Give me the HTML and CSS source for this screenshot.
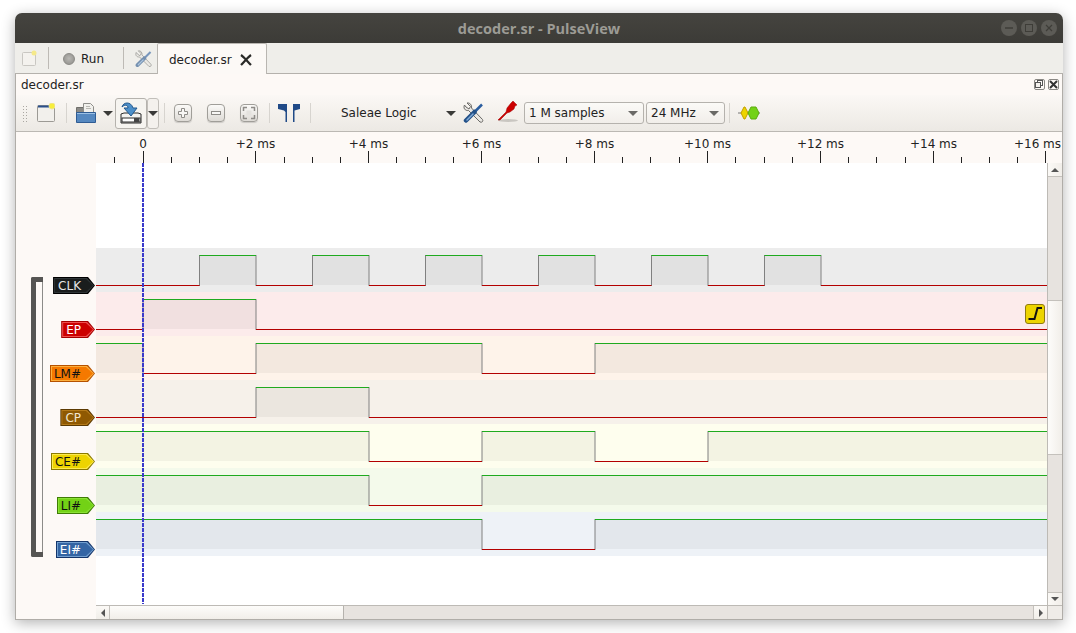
FILE: index.html
```html
<!DOCTYPE html>
<html>
  <head>
    <title>decoder.sr - PulseView</title>
    <link rel="stylesheet" href="styles.css">
  </head>
  <body>
    <div class="window">
      <header class="titlebar">
        <span class="title">decoder.sr - PulseView</span>
        <div class="win-buttons">
          <span class="win-btn"><svg width="16" height="16"><path d="M4 8h8" stroke="#3e3d38" stroke-width="1.5"/></svg></span>
          <span class="win-btn"><svg width="16" height="16"><rect x="4.5" y="4.5" width="7" height="7" fill="none" stroke="#3e3d38"/></svg></span>
          <span class="win-btn"><svg width="16" height="16"><path d="M5 5l6 6M11 5l-6 6" stroke="#3e3d38" stroke-width="1.2"/></svg></span>
        </div>
      </header>

      <nav class="tabbar">
        <svg class="tab-new" width="16" height="17" viewBox="0 0 16 17">
          <rect x="1.5" y="2.5" width="13" height="13" rx="1" fill="#f4f2ee" stroke="#c9c7c2"/>
          <circle cx="13" cy="3" r="2.5" fill="#f5e98a"/>
        </svg>
        <span class="tab-sep"></span>
        <span class="run-led"></span>
        <span class="run-text">Run</span>
        <span class="tab-sep tab-sep-2"></span>
        <svg class="tab-tool" width="18" height="18" viewBox="0 0 22 22">
          <path d="M4 1L7.5 4.5 6 7 3 5 1.5 3C0 6 2 9 5.5 8.5L17 20c2 1 3.5-1 2.5-2.5L8.5 6C9 3 7 .5 4 1z" fill="#e9e7e3" stroke="#6a6966"/>
          <path d="M19 2.5L12 9.5" stroke="#2a5d9f" stroke-width="2.5"/>
          <path d="M11.5 10L3 18.5" stroke="#235189" stroke-width="4.5" stroke-linecap="round"/>
          <path d="M10 12L4 18" stroke="#7fa9d6" stroke-width="1.5" stroke-linecap="round"/>
        </svg>
        <div class="tab-active">
          <span>decoder.sr</span>
          <svg width="12" height="12" viewBox="0 0 12 12"><path d="M1 1c3 2 7 7 10 10M11 1C8 3 4 8 1 11" fill="none" stroke="#2a2a28" stroke-width="2.2"/></svg>
        </div>
      </nav>

      <div class="pane">
        <div class="dock-title">
          <span>decoder.sr</span>
          <div class="dock-buttons">
            <span class="dock-btn"><svg width="11" height="11"><rect x="3.5" y="1.5" width="5" height="5" fill="none" stroke="#555"/><rect x="1.5" y="3.5" width="5" height="5" fill="#f4f1ed" stroke="#555"/></svg></span>
            <span class="dock-btn"><svg width="11" height="11"><path d="M2 2l7 7M9 2l-7 7" stroke="#333" stroke-width="2"/></svg></span>
          </div>
        </div>

        <div class="toolbar">
          <span class="grip"></span>

          <svg class="tb-new" width="18" height="19" viewBox="0 0 18 19">
            <rect x=".5" y="2.5" width="17" height="16" rx="1" fill="#f2f0ec" stroke="#9c9a95"/>
            <path d="M1 3.5h15" stroke="#2a4f8a" stroke-width="2"/>
            <circle cx="15" cy="3" r="3" fill="#f7ee3c" stroke="#efe58c"/>
          </svg>

          <span class="sep sep-new"></span>

          <svg class="tb-open" width="20" height="20" viewBox="0 0 20 20">
            <path d="M.5 4.5h7v6h-7z" fill="#8b8a86" stroke="#6f6e6a"/>
            <path d="M7.5 .5h7l3 3v8h-10z" fill="#f1f0ec" stroke="#8f8e8a"/>
            <path d="M10 3.5h4M10 5.5h5" stroke="#b9b8b3"/>
            <path d="M.5 9.5h19v10h-19z" fill="#5588c0" stroke="#2f5c94"/>
            <path d="M1 10.5h18" stroke="#9cc0e4"/>
          </svg>
          <span class="arrow-down tb-open-arrow"></span>

          <div class="save-btn">
            <svg width="24" height="24" viewBox="0 0 24 24">
              <path d="M2 15v-2l3-1h14l3 1v9H2z" fill="#f3f2ef" stroke="#2b2b2b"/>
              <rect x="3" y="17" width="18" height="4" fill="#fff" stroke="#2b2b2b"/>
              <rect x="15" y="17" width="5" height="4" fill="#444"/>
              <path d="M3 6c1-5 9-6 11 1h4l-6 8-7-8h4C9 4 6 3 3 6z" fill="#4c8fc9" stroke="#235a8f"/>
            </svg>
          </div>
          <div class="save-drop"><span class="arrow-down"></span></div>

          <span class="sep sep-save"></span>

          <span class="zoom-btn zoom-in">
            <svg width="12" height="12" viewBox="0 0 12 12"><path d="M4.5 1.5h3v3h3v3h-3v3h-3v-3h-3v-3h3z" fill="#f8f7f5" stroke="#8e8c88"/></svg>
          </span>
          <span class="zoom-btn zoom-gap">
            <svg width="12" height="12" viewBox="0 0 12 12"><rect x="1.5" y="4.5" width="9" height="3" fill="#f8f7f5" stroke="#8e8c88"/></svg>
          </span>
          <span class="zoom-btn zoom-gap">
            <svg width="14" height="14" viewBox="0 0 14 14"><path d="M1.5 5V1.5H5M9 1.5h3.5V5M12.5 9v3.5H9M5 12.5H1.5V9" fill="none" stroke="#8e8c88" stroke-width="1.5"/><rect x="4.5" y="4.5" width="5" height="5" fill="#e4e2de"/></svg>
          </span>

          <span class="sep sep-zoom"></span>

          <svg class="tb-flags" width="22" height="18" viewBox="0 0 22 18">
            <path d="M0 0h9v18H7.5V8L6 6.5 0 5z" fill="#204a87"/>
            <path d="M15 0h7v5l-5.5 1.5V18H15z" fill="#204a87"/>
          </svg>

          <span class="sep sep-flags"></span>

          <div class="device">
            <span>Saleae Logic</span>
            <span class="arrow-down"></span>
          </div>

          <svg class="tb-tool" width="22" height="22" viewBox="0 0 22 22">
            <path d="M4 1L7.5 4.5 6 7 3 5 1.5 3C0 6 2 9 5.5 8.5L17 20c2 1 3.5-1 2.5-2.5L8.5 6C9 3 7 .5 4 1z" fill="#e9e7e3" stroke="#6a6966"/>
            <path d="M19 2.5L12 9.5" stroke="#2a5d9f" stroke-width="2.5"/>
            <path d="M11.5 10L3 18.5" stroke="#235189" stroke-width="4.5" stroke-linecap="round"/>
            <path d="M10 12L4 18" stroke="#7fa9d6" stroke-width="1.5" stroke-linecap="round"/>
          </svg>

          <svg class="tb-probe" width="21" height="22" viewBox="0 0 21 22">
            <ellipse cx="11" cy="19.5" rx="10" ry="1.5" fill="#c9c6c1"/>
            <path d="M1 19L9 11 10 7 14 2l2-2 4 4-2 1-1 3-4 3-3 1-7 7z" fill="#cc0000" stroke="#a00000" stroke-width=".5"/>
          </svg>

          <div class="combo combo-samples"><span>1 M samples</span><span class="arrow-down arrow-grey"></span></div>
          <div class="combo combo-rate"><span>24 MHz</span><span class="arrow-down arrow-grey"></span></div>

          <span class="sep sep-combo"></span>

          <svg class="tb-decoder" width="22" height="14" viewBox="0 0 22 14">
            <path d="M0 7h22" stroke="#777"/>
            <path d="M6 1h1l3 6-3 6H6L3 7z" fill="#edd400" stroke="#c4a000"/>
            <path d="M13 1h5l3 6-3 6h-5l-3-6z" fill="#73d216" stroke="#5cab0e"/>
          </svg>
        </div>

        <div class="ruler">
          <svg width="1046" height="31" viewBox="0 0 1046 31">
            <path class="tick" d="M127.5 19V31M239.5 19V31M352.5 19V31M465.5 19V31M578.5 19V31M691.5 19V31M804.5 19V31M917.5 19V31M1029.5 19V31"/>
            <path class="tick" d="M98.5 25V31M155.5 25V31M183.5 25V31M211.5 25V31M268.5 25V31M296.5 25V31M324.5 25V31M380.5 25V31M409.5 25V31M437.5 25V31M493.5 25V31M522.5 25V31M550.5 25V31M606.5 25V31M634.5 25V31M663.5 25V31M719.5 25V31M748.5 25V31M776.5 25V31M832.5 25V31M860.5 25V31M889.5 25V31M945.5 25V31M973.5 25V31M1001.5 25V31"/>
            <text x="127" y="16">0</text>
            <text x="239.5" y="16">+2 ms</text>
            <text x="352.5" y="16">+4 ms</text>
            <text x="465.5" y="16">+6 ms</text>
            <text x="578.5" y="16">+8 ms</text>
            <text x="691.5" y="16">+10 ms</text>
            <text x="804.5" y="16">+12 ms</text>
            <text x="917.5" y="16">+14 ms</text>
            <text x="1021.5" y="16">+16 ms</text>
          </svg>
        </div>

        <div class="view">
          <div class="labels">
            <div class="bracket"></div>
            <div class="tags">
              <div class="tag tag-clk"><span>CLK</span></div>
              <div class="tag tag-ep"><span>EP</span></div>
              <div class="tag tag-lm"><span>LM#</span></div>
              <div class="tag tag-cp"><span>CP</span></div>
              <div class="tag tag-ce"><span>CE#</span></div>
              <div class="tag tag-li"><span>LI#</span></div>
              <div class="tag tag-ei"><span>EI#</span></div>
            </div>
          </div>

          <div class="traces">
            <div class="row row-clk">
              <svg class="wave" width="951" height="44">
                <path class="fill" d="M103.5 7H160V37H103.5ZM216.5 7H273V37H216.5ZM329.5 7H386V37H329.5ZM442.5 7H499V37H442.5ZM555.5 7H612V37H555.5ZM668.5 7H725V37H668.5Z"/>
                <path class="edge" d="M103.5 7V38M160 7V38M216.5 7V38M273 7V38M329.5 7V38M386 7V38M442.5 7V38M499 7V38M555.5 7V38M612 7V38M668.5 7V38M725 7V38"/>
                <path class="hi" d="M103.5 7.5H160M216.5 7.5H273M329.5 7.5H386M442.5 7.5H499M555.5 7.5H612M668.5 7.5H725"/>
                <path class="lo" d="M0 37.5H103.5M160 37.5H216.5M273 37.5H329.5M386 37.5H442.5M499 37.5H555.5M612 37.5H668.5M725 37.5H951"/>
              </svg>
            </div>
            <div class="row row-ep">
              <svg class="wave" width="951" height="44">
                <path class="fill" d="M47 7H160V37H47Z"/>
                <path class="edge" d="M47 7V38M160 7V38"/>
                <path class="hi" d="M47 7.5H160"/>
                <path class="lo" d="M0 37.5H47M160 37.5H951"/>
              </svg>
              <div class="trigger">
                <svg width="19" height="18" viewBox="0 0 19 18"><path d="M2.5 14h6l3-11h4.5" fill="none" stroke="#111" stroke-width="2"/></svg>
              </div>
            </div>
            <div class="row row-lm">
              <svg class="wave" width="951" height="44">
                <path class="fill" d="M0 7H47V37H0ZM160 7H386V37H160ZM499 7H951V37H499Z"/>
                <path class="edge" d="M47 7V38M160 7V38M386 7V38M499 7V38"/>
                <path class="hi" d="M0 7.5H47M160 7.5H386M499 7.5H951"/>
                <path class="lo" d="M47 37.5H160M386 37.5H499"/>
              </svg>
            </div>
            <div class="row row-cp">
              <svg class="wave" width="951" height="44">
                <path class="fill" d="M160 7H273V37H160Z"/>
                <path class="edge" d="M160 7V38M273 7V38"/>
                <path class="hi" d="M160 7.5H273"/>
                <path class="lo" d="M0 37.5H160M273 37.5H951"/>
              </svg>
            </div>
            <div class="row row-ce">
              <svg class="wave" width="951" height="44">
                <path class="fill" d="M0 7H273V37H0ZM386 7H499V37H386ZM612 7H951V37H612Z"/>
                <path class="edge" d="M273 7V38M386 7V38M499 7V38M612 7V38"/>
                <path class="hi" d="M0 7.5H273M386 7.5H499M612 7.5H951"/>
                <path class="lo" d="M273 37.5H386M499 37.5H612"/>
              </svg>
            </div>
            <div class="row row-li">
              <svg class="wave" width="951" height="44">
                <path class="fill" d="M0 7H273V37H0ZM386 7H951V37H386Z"/>
                <path class="edge" d="M273 7V38M386 7V38"/>
                <path class="hi" d="M0 7.5H273M386 7.5H951"/>
                <path class="lo" d="M273 37.5H386"/>
              </svg>
            </div>
            <div class="row row-ei">
              <svg class="wave" width="951" height="44">
                <path class="fill" d="M0 7H386V37H0ZM499 7H951V37H499Z"/>
                <path class="edge" d="M386 7V38M499 7V38"/>
                <path class="hi" d="M0 7.5H386M499 7.5H951"/>
                <path class="lo" d="M386 37.5H499"/>
              </svg>
            </div>
            <div class="cursor"></div>
          </div>

          <div class="vbar">
            <div class="sb-btn"><span class="arrow-up"></span></div>
            <div class="sb-track vtrack-top"></div>
            <div class="vthumb"></div>
            <div class="sb-track vtrack-bottom"></div>
            <div class="sb-btn sb-btn-down"><span class="arrow-down arrow-small"></span></div>
          </div>

          <div class="hbar">
            <div class="sb-btn-h"><span class="arrow-left"></span></div>
            <div class="hthumb"></div>
            <div class="sb-track htrack"></div>
            <div class="sb-btn-h sb-btn-right"><span class="arrow-right"></span></div>
          </div>

          <div class="corner"></div>
        </div>
      </div>
    </div>
  </body>
</html>
```

FILE: styles.css
```css
* {box-sizing: border-box;}

html {
  background-color: #fff;
}

body {
  margin: 0;
  width: 1076px;
  height: 633px;
  padding: 13px 13px 13px 15px;
  overflow: hidden;
  font-family: "DejaVu Sans", sans-serif;
  font-size: 12px;
  color: #222;
}

svg {
  display: block;
  flex: none;
}

.window {
  display: flex;
  flex-direction: column;
  width: 1048px;
  height: 607px;
  border-radius: 7px 7px 0 0;
  box-shadow: 0 3px 14px rgba(0,0,0,0.3);
  background-color: #efeeea;
}

.titlebar {
  position: relative;
  display: flex;
  align-items: center;
  justify-content: center;
  height: 30px;
  flex: none;
  border-radius: 7px 7px 0 0;
  background: linear-gradient(#45443f, #3c3b37);
}

.title {
  font-family: "Open Sans", sans-serif;
  font-size: 14.5px;
  font-weight: 700;
  color: #9c9b95;
}

.win-buttons {
  position: absolute;
  right: 6px;
  top: 7px;
  display: flex;
  gap: 4px;
}

.win-btn {
  width: 16px;
  height: 16px;
  border-radius: 50%;
  background-color: #5c5b56;
}

/* tabs */
.tabbar {
  display: flex;
  align-items: center;
  height: 31px;
  flex: none;
  padding-left: 6px;
  border-bottom: 1px solid #b4b1ac;
}

.tab-new {
  margin-top: 1px;
}

.tab-sep {
  width: 1px;
  height: 22px;
  margin-left: 11px;
  background-color: #bdbab5;
}

.tab-sep-2 {
  margin-left: 20px;
}

.run-led {
  width: 12px;
  height: 12px;
  margin-left: 14px;
  margin-top: 2px;
  border-radius: 50%;
  border: 1px solid #8b8a86;
  background: radial-gradient(circle at 50% 45%, #b9b8b4, #8e8d89);
}

.run-text {
  margin-left: 6px;
  margin-top: 2px;
  width: 22px;
}

.tab-tool {
  margin-left: 11px;
  margin-top: 2px;
  opacity: 0.6;
}

.tab-active {
  display: flex;
  align-items: center;
  gap: 8px;
  width: 110px;
  height: 31px;
  margin-left: 4px;
  padding: 2px 0 0 11px;
  border: 1px solid #b9b6b1;
  border-bottom: 0;
  border-radius: 2px 2px 0 0;
  background-color: #fcf9f6;
}

/* dock pane */
.pane {
  display: flex;
  flex-direction: column;
  flex: 1;
  border: 1px solid #b0ada8;
  border-top: 0;
  background-color: #fdf9f6;
}

.dock-title {
  display: flex;
  align-items: center;
  justify-content: space-between;
  height: 21px;
  flex: none;
  padding: 0 3px 0 5px;
}

.dock-buttons {
  display: flex;
  gap: 3px;
}

.dock-btn {
  width: 11px;
  height: 11px;
  outline: 1px solid #8a8884;
  outline-offset: -1px;
  border-radius: 2px;
}

.toolbar {
  display: flex;
  align-items: center;
  height: 37px;
  flex: none;
  padding-left: 6px;
  border-bottom: 1px solid #bbb8b3;
  background: linear-gradient(#fbf8f5, #ece9e4);
}

.grip {
  width: 5px;
  height: 17px;
  background: radial-gradient(circle, #aaa7a2 35%, transparent 45%) 0 0 / 3px 3px;
}

.sep {
  width: 1px;
  height: 20px;
  background-color: #d7d4cf;
}

.tb-new {
  margin-left: 10px;
  margin-top: -1px;
}

.sep-new {
  margin-left: 11px;
}

.tb-open {
  margin-left: 9px;
  margin-top: -1px;
}

.tb-open-arrow {
  margin-left: 7px;
}

.save-btn {
  display: flex;
  align-items: center;
  justify-content: center;
  width: 32px;
  height: 31px;
  margin-left: 2px;
  border: 1px solid #b5b2ad;
  border-radius: 3px;
  background-color: #f6f4f0;
}

.save-drop {
  display: flex;
  align-items: center;
  justify-content: center;
  width: 12px;
  height: 31px;
  border: 1px solid #c2bfba;
  border-radius: 3px;
  background-color: #f4f1ed;
}

.sep-save {
  margin-left: 5px;
}

.zoom-btn {
  display: flex;
  align-items: center;
  justify-content: center;
  width: 18px;
  height: 18px;
  border: 1px solid #a09e99;
  border-radius: 4px;
  background: linear-gradient(#fbfaf8, #dedbd6);
  box-shadow: 0 1px 1px rgba(0,0,0,0.15);
}

.zoom-in {
  margin-left: 9px;
}

.zoom-gap {
  margin-left: 15px;
}

.sep-zoom {
  margin-left: 11px;
}

.tb-flags {
  margin-left: 8px;
}

.sep-flags {
  margin-left: 10px;
}

.device {
  display: flex;
  align-items: center;
  justify-content: space-between;
  width: 115px;
  margin-left: 30px;
}

.tb-tool {
  margin-left: 7px;
}

.tb-probe {
  margin-left: 12px;
  margin-top: -2px;
}

.combo {
  display: flex;
  align-items: center;
  justify-content: space-between;
  height: 22px;
  padding: 0 4px;
  border: 1px solid #b5b2ad;
  border-radius: 3px;
  background: linear-gradient(#fbfaf7, #f1eeea);
}

.combo-samples {
  width: 120px;
  margin-left: 6px;
}

.combo-rate {
  width: 79px;
  margin-left: 2px;
}

.sep-combo {
  margin-left: 4px;
}

.tb-decoder {
  margin-left: 8px;
}

.arrow-down {
  width: 0;
  height: 0;
  border-left: 5px solid transparent;
  border-right: 5px solid transparent;
  border-top: 5px solid #3a3a38;
}

.arrow-grey {
  margin-right: 1px;
  border-top-color: #6a6966;
}

.arrow-small {
  border-left-width: 4px;
  border-right-width: 4px;
  border-top-width: 4px;
  border-top-color: #555;
}

.arrow-up {
  width: 0;
  height: 0;
  border-left: 4px solid transparent;
  border-right: 4px solid transparent;
  border-bottom: 4px solid #555;
}

.arrow-left {
  width: 0;
  height: 0;
  border-top: 4px solid transparent;
  border-bottom: 4px solid transparent;
  border-right: 4px solid #555;
}

.arrow-right {
  width: 0;
  height: 0;
  border-top: 4px solid transparent;
  border-bottom: 4px solid transparent;
  border-left: 4px solid #555;
}

/* ruler */
.ruler {
  height: 31px;
  flex: none;
}

.ruler text {
  font-size: 12px;
  text-anchor: middle;
  fill: #222;
}

.tick {
  stroke: #222;
  fill: none;
}

/* main view */
.view {
  display: grid;
  grid-template-columns: 80px 951px 15px;
  grid-template-rows: 442px 14px;
  flex: none;
}

.labels {
  grid-row: 1 / 3;
  display: flex;
  padding: 114px 1px 0 15px;
}

.bracket {
  width: 12px;
  height: 280px;
  flex: none;
  border: 5px solid #565553;
  border-right: 0;
  border-radius: 2px 0 0 2px;
  box-shadow: -1px 0 0 #8c8b88 inset;
}

.tags {
  display: flex;
  flex: 1;
  flex-direction: column;
  align-items: flex-end;
  gap: 27px;
}

.tag {
  position: relative;
  display: flex;
  align-items: center;
  height: 17px;
  padding: 0 14px 0 5px;
  --point: polygon(0 0, calc(100% - 7px) 0, 100% 50%, calc(100% - 7px) 100%, 0 100%);
  clip-path: var(--point);
  background-color: var(--edge);
}

.tag::before,
.tag::after {
  content: '';
  position: absolute;
  clip-path: var(--point);
}

.tag::before {
  inset: 1px;
  background-color: var(--light);
}

.tag::after {
  inset: 2px;
  background-color: var(--body);
}

.tag span {
  position: relative;
  z-index: 1;
  color: var(--text);
}

.tag-clk {--edge: #000; --light: #2e3436; --body: #1a1d1d; --text: #e6e6e6;}
.tag-ep {--edge: #a40000; --light: #ef5050; --body: #cc0000; --text: #fff;}
.tag-lm {--edge: #b65200; --light: #fcaf3e; --body: #f57900; --text: #111; padding-left: 4px;}
.tag-cp {--edge: #5c3a02; --light: #b47a1a; --body: #8f5902; --text: #f3e6cf;}
.tag-ce {--edge: #8a7a00; --light: #fce94f; --body: #edd400; --text: #111; padding-left: 4px;}
.tag-li {--edge: #3f7d05; --light: #8ae234; --body: #73d216; --text: #111; padding-left: 4px;}
.tag-ei {--edge: #14356b; --light: #729fcf; --body: #3465a4; --text: #fff; padding-left: 4px;}

.traces {
  position: relative;
  padding-top: 85px;
  background-color: #fff;
}

.row {
  position: relative;
  height: 44px;
}

.row-clk {background-color: #ececec;}
.row-ep {background-color: #fcebeb;}
.row-lm {background-color: #fef3ea;}
.row-cp {background-color: #f6f1ea;}
.row-ce {background-color: #fefeee;}
.row-li {background-color: #f4faeb;}
.row-ei {background-color: #eef2f7;}

.wave .fill {
  fill: #000;
  fill-opacity: 0.045;
}

.wave .edge {
  stroke: #808080;
  fill: none;
}

.wave .hi {
  stroke: #1faa1f;
  fill: none;
}

.wave .lo {
  stroke: #b30000;
  fill: none;
}

.trigger {
  position: absolute;
  right: 2px;
  top: 12px;
  width: 20px;
  height: 20px;
  border: 1px solid #8f7a10;
  border-radius: 3px;
  background-color: #edd400;
}

.cursor {
  position: absolute;
  left: 46px;
  top: 0;
  bottom: 1px;
  width: 2px;
  background: repeating-linear-gradient(#3a3acb 0 4px, transparent 4px 5px);
}

/* scrollbars */
.vbar {
  display: flex;
  flex-direction: column;
  border-left: 1px solid #bdbab5;
}

.sb-btn {
  display: flex;
  align-items: center;
  justify-content: center;
  height: 14px;
  flex: none;
  background: linear-gradient(90deg, #fbf9f6, #f1eee9);
  border-bottom: 1px solid #c4c1bc;
}

.sb-btn-down {
  height: 13px;
  border-bottom: 0;
  border-top: 1px solid #c4c1bc;
}

.sb-track {
  background-color: #e7e3df;
}

.vtrack-top {
  height: 123px;
  flex: none;
}

.vthumb {
  height: 155px;
  flex: none;
  border-top: 1px solid #c4c1bc;
  border-bottom: 1px solid #c4c1bc;
  background: linear-gradient(90deg, #fdfcfa, #f1eee9);
}

.vtrack-bottom {
  flex: 1;
}

.hbar {
  display: flex;
  border-top: 1px solid #bdbab5;
}

.sb-btn-h {
  display: flex;
  align-items: center;
  justify-content: center;
  width: 14px;
  flex: none;
  background: linear-gradient(#fbf9f6, #f1eee9);
  border-right: 1px solid #c4c1bc;
}

.sb-btn-right {
  border-right: 0;
  border-left: 1px solid #c4c1bc;
}

.hthumb {
  width: 234px;
  flex: none;
  border-right: 1px solid #b5b2ad;
  background: linear-gradient(#fdfcfa, #f1eee9);
}

.htrack {
  flex: 1;
}

.corner {
  border-top: 1px solid #bdbab5;
  border-left: 1px solid #bdbab5;
  background-color: #efece8;
}
```
